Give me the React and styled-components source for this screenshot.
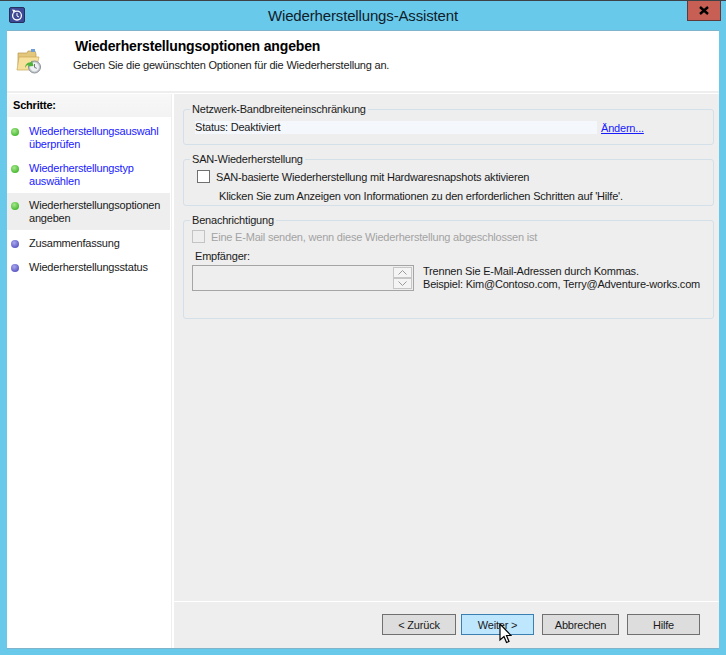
import React from "react";
import styled, { createGlobalStyle } from "styled-components";

const GlobalStyle = createGlobalStyle`
  html, body {
    margin: 0;
    padding: 0;
    background: #69c9ea;
  }
  body {
    font-family: "Liberation Sans", Arial, sans-serif;
    font-size: 11px;
    letter-spacing: -0.2px;
    color: #1a1a1a;
    white-space: nowrap;
  }
`;

const Window = styled.div`
  position: relative;
  width: 726px;
  height: 655px;
  overflow: hidden;
  background: #69c9ea;
  border-top: 1px solid #3d4248;
  box-sizing: border-box;
  display: flex;
  flex-direction: column;
`;

const TitleBar = styled.div`
  display: grid;
  grid-template-columns: 1fr auto 1fr;
  height: 30px;
  padding: 0 9px;
  box-sizing: border-box;
  flex: none;
`;

const AppIcon = styled.svg`
  width: 16px;
  height: 16px;
  margin-top: 6px;
`;

const TitleText = styled.div`
  font-size: 15px;
  letter-spacing: -0.15px;
  line-height: 30px;
  color: #10202a;
`;

const CloseButton = styled.div`
  justify-self: end;
  width: 34px;
  height: 21px;
  margin: -1px -4px 0 0;
  box-sizing: border-box;
  background: #c75f55;
  border: 1px solid #5e3a3c;
  border-top: none;
  display: flex;
  align-items: center;
  justify-content: center;
`;

const Client = styled.div`
  margin: 0 7px;
  height: 617px;
  flex: none;
  background: #fff;
  display: flex;
  flex-direction: column;
  box-shadow: 0 -1px 0 #7fb4cc, 0 1px 0 #7fb4cc;
`;

const Banner = styled.div`
  height: 60px;
  flex: none;
  border-bottom: 2px solid #eeeeee;
  margin-bottom: 1px;
  position: relative;
  display: grid;
  grid-template-columns: 60px 1fr;
`;

const BannerIcon = styled.svg`
  width: 26px;
  height: 26px;
  margin: 17px 0 0 9px;
`;

const BannerText = styled.div`
  padding-top: 7px;
`;

const BannerTitle = styled.div`
  font-size: 14px;
  letter-spacing: -0.15px;
  font-weight: bold;
  line-height: 16px;
  color: #000;
  margin-left: 8px;
`;

const BannerSub = styled.div`
  line-height: 14px;
  margin-left: 6px;
  margin-top: 4px;
`;

const Columns = styled.div`
  flex: 1;
  display: grid;
  grid-template-columns: 164px 3px minmax(0, 1fr);
  min-height: 0;
`;

const Sidebar = styled.div`
  background: #fff;
`;

const SidebarHead = styled.div`
  height: 23px;
  background: linear-gradient(#f8f8f8, #f3f3f3);
  font-weight: bold;
  line-height: 23px;
  padding-left: 6px;
  margin-bottom: 2px;
  color: #000;
`;

const StepRow = styled.div`
  display: grid;
  grid-template-columns: 22px 1fr;
  padding: ${(p) => (p.$two ? "6px 0 5px" : "7px 0 4px")};
  margin-right: 1px;
  line-height: 13px;
  background: ${(p) => (p.$active ? "#eeeeee" : "transparent")};
  color: ${(p) => (p.$link ? "#1a1aff" : "#1a1a1a")};
`;

const Bullet = styled.span`
  width: 8px;
  height: 8px;
  border-radius: 50%;
  margin: 3px 0 0 4px;
  background: ${(p) =>
    p.$done
      ? "radial-gradient(circle at 40% 35%, #a6e88c, #46b82e 75%)"
      : "radial-gradient(circle at 40% 35%, #a9a9ee, #5a56c4 75%)"};
`;

const Divider = styled.div`
  background: linear-gradient(90deg, #eeeeee 0 1px, #fff 1px);
`;

const Main = styled.div`
  background: #eeeeee;
  display: flex;
  flex-direction: column;
`;

const Content = styled.div`
  flex: 1;
  padding: 8px 5px 0 9px;
  display: flex;
  flex-direction: column;
`;

const Group = styled.fieldset`
  margin: 0 0 7px;
  padding: 0;
  border: 1px solid #d3dfe9;
  border-radius: 3px;
  height: ${(p) => p.$h}px;
  box-sizing: border-box;
  position: relative;
  min-width: 0;
`;

const Legend = styled.legend`
  margin-left: 6px;
  padding: 0 2px;
  line-height: 14px;
`;

const StatusRow = styled.div`
  display: flex;
  align-items: center;
  margin: 5px 0 0 11px;
  height: 13px;
`;

const StatusBand = styled.div`
  width: 402px;
  height: 13px;
  line-height: 13px;
  box-sizing: border-box;
  background: #f4f7fc;
`;

const ChangeLink = styled.a`
  margin-left: 4px;
  color: #1a1aff;
  text-decoration: underline;
`;

const CheckRow = styled.div`
  display: flex;
  align-items: center;
  gap: 6px;
  height: 13px;
  margin: ${(p) => p.$m};
  color: ${(p) => (p.$off ? "#a3a3a3" : "inherit")};
`;

const Box = styled.span`
  width: 13px;
  height: 13px;
  box-sizing: border-box;
  background: ${(p) => (p.$off ? "#eeeeee" : "#fff")};
  border: 1px solid ${(p) => (p.$off ? "#c4c4c4" : "#707070")};
`;

const Hint = styled.div`
  margin: 7px 0 0 35px;
  line-height: 13px;
`;

const RecipientLabel = styled.div`
  margin: 6px 0 0 11px;
  line-height: 14px;
`;

const RecipientRow = styled.div`
  display: flex;
  margin: 2px 0 0 8px;
  height: 26px;
`;

const Recipient = styled.div`
  width: 222px;
  height: 26px;
  box-sizing: border-box;
  border: 1px solid #a5a5a5;
  background: #eeeeee;
  display: flex;
  flex-direction: column;
  align-items: flex-end;
  padding: 1px;
`;

const Spin = styled.div`
  width: 17px;
  height: 11px;
  border: 1px solid #c6c6c6;
  background: #f4f4f4;
  display: flex;
  align-items: center;
  justify-content: center;
`;

const RecipientNote = styled.div`
  margin: 0 0 0 9px;
  line-height: 13px;
`;

const Footer = styled.div`
  flex: none;
  height: 47px;
  box-sizing: border-box;
  border-top: 1px solid #fff;
  display: flex;
  align-items: flex-start;
  padding: 12px 0 0 208px;
`;

const Button = styled.div`
  width: ${(p) => p.$w}px;
  margin-left: ${(p) => p.$gap || 0}px;
  height: 21px;
  box-sizing: border-box;
  text-align: center;
  line-height: 20px;
  background: ${(p) => (p.$hover ? "#bee6fd" : "#dddddd")};
  border: 1px solid ${(p) => (p.$hover ? "#3c7fb1" : "#707070")};
`;

const Cursor = styled.svg`
  position: absolute;
  left: 499px;
  top: 622px;
  width: 13px;
  height: 22px;
`;

const steps = [
  { text: ["Wiederherstellungsauswahl", "überprüfen"], done: true, link: true },
  { text: ["Wiederherstellungstyp", "auswählen"], done: true, link: true },
  { text: ["Wiederherstellungsoptionen", "angeben"], done: true, active: true },
  { text: ["Zusammenfassung"] },
  { text: ["Wiederherstellungsstatus"] },
];

export default function App() {
  return (
    <>
      <GlobalStyle />
      <Window>
        <TitleBar>
          <AppIcon viewBox="0 0 16 16">
            <rect x="0.5" y="0.5" width="15" height="15" rx="1.5" fill="#3f4a97" stroke="#26305f" />
            <circle cx="8" cy="8.6" r="4.4" fill="none" stroke="#fff" strokeWidth="1.3" />
            <path d="M8 6v3l2 1" fill="none" stroke="#fff" strokeWidth="1" />
            <path d="M3 2.500l3.500 .5-1.800 2.400z" fill="#fff" />
          </AppIcon>
          <TitleText>Wiederherstellungs-Assistent</TitleText>
          <CloseButton>
            <svg width="10" height="9" viewBox="0 0 10 9">
              <path d="M1 1l8 7M9 1l-8 7" stroke="#000" strokeWidth="2.4" />
            </svg>
          </CloseButton>
        </TitleBar>
        <Client>
          <Banner>
            <BannerIcon viewBox="0 0 26 26">
              <path d="M2 5h9l1-2h7l1 3v11H2z" fill="#e3c77c" stroke="#b99a4e" strokeWidth="0.7" />
              <path d="M3 9h20l-3 13H1z" fill="#f7e09c" stroke="#c9a658" strokeWidth="0.7" />
              <rect x="15" y="1" width="4" height="3" fill="#6f9fd8" />
              <circle cx="18.500" cy="19" r="6" fill="#c4cacf" stroke="#8a9197" />
              <circle cx="18.500" cy="19" r="4.400" fill="#eef1f3" />
              <path d="M18.500 16v3.300l2.200 1" fill="none" stroke="#666" strokeWidth="0.9" />
              <path d="M9 20c0-4 3-6 6-5.500l1-2 1.500 5.500-5.500 .5 1-1.800c-1.500 0-3 1-4 3.300z" fill="#4fb33a" />
            </BannerIcon>
            <BannerText>
              <BannerTitle>Wiederherstellungsoptionen angeben</BannerTitle>
              <BannerSub>Geben Sie die gewünschten Optionen für die Wiederherstellung an.</BannerSub>
            </BannerText>
          </Banner>
          <Columns>
            <Sidebar>
              <SidebarHead>Schritte:</SidebarHead>
              {steps.map((s) => (
                <StepRow key={s.text[0]} $two={s.text.length > 1} $active={s.active} $link={s.link}>
                  <Bullet $done={s.done} />
                  <div>
                    {s.text.map((line) => (
                      <div key={line}>{line}</div>
                    ))}
                  </div>
                </StepRow>
              ))}
            </Sidebar>
            <Divider />
            <Main>
              <Content>
                <Group $h={43}>
                  <Legend>Netzwerk-Bandbreiteneinschränkung</Legend>
                  <StatusRow>
                    <StatusBand>Status: Deaktiviert</StatusBand>
                    <ChangeLink>Ändern...</ChangeLink>
                  </StatusRow>
                </Group>
                <Group $h={54}>
                  <Legend>SAN-Wiederherstellung</Legend>
                  <CheckRow $m="4px 0 0 13px">
                    <Box />
                    SAN-basierte Wiederherstellung mit Hardwaresnapshots aktivieren
                  </CheckRow>
                  <Hint>Klicken Sie zum Anzeigen von Informationen zu den erforderlichen Schritten auf 'Hilfe'.</Hint>
                </Group>
                <Group $h={106}>
                  <Legend>Benachrichtigung</Legend>
                  <CheckRow $m="3px 0 0 8px" $off>
                    <Box $off />
                    Eine E-Mail senden, wenn diese Wiederherstellung abgeschlossen ist
                  </CheckRow>
                  <RecipientLabel>Empfänger:</RecipientLabel>
                  <RecipientRow>
                    <Recipient>
                      <Spin>
                        <svg width="9" height="5" viewBox="0 0 9 5">
                          <path d="M.5 4.500l4-4 4 4" fill="none" stroke="#9a9a9a" />
                        </svg>
                      </Spin>
                      <Spin>
                        <svg width="9" height="5" viewBox="0 0 9 5">
                          <path d="M.5 .5l4 4 4-4" fill="none" stroke="#9a9a9a" />
                        </svg>
                      </Spin>
                    </Recipient>
                    <RecipientNote>
                      Trennen Sie E-Mail-Adressen durch Kommas.
                      <br />
                      Beispiel: Kim@Contoso.com, Terry@Adventure-works.com
                    </RecipientNote>
                  </RecipientRow>
                </Group>
              </Content>
              <Footer>
                <Button $w={74}>&lt; Zurück</Button>
                <Button $w={73} $gap={5} $hover>Weiter &gt;</Button>
                <Button $w={77} $gap={8}>Abbrechen</Button>
                <Button $w={73} $gap={8}>Hilfe</Button>
              </Footer>
            </Main>
          </Columns>
        </Client>
        <Cursor viewBox="0 0 13 22">
          <path d="M1 1v16l4-3.500 2.500 6 2.500-1-2.500-6H12z" fill="#fff" stroke="#000" strokeWidth="1.200" />
        </Cursor>
      </Window>
    </>
  );
}
